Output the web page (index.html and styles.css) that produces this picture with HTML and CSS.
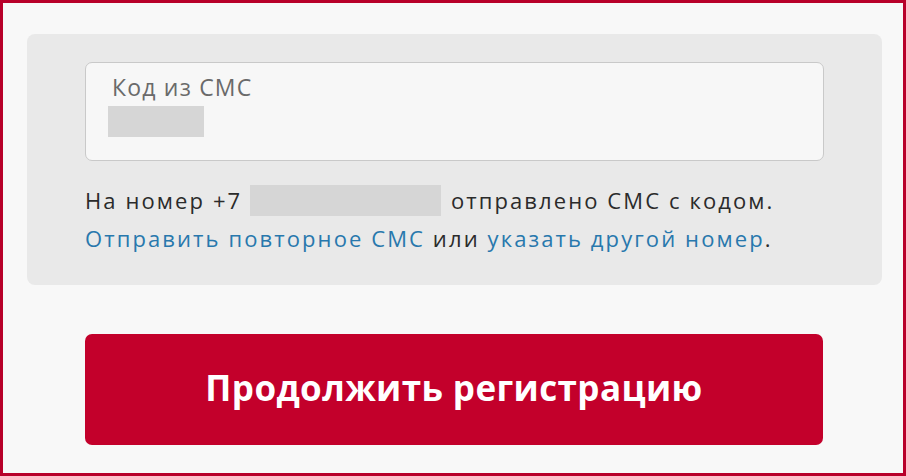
FILE: index.html
```html
<!DOCTYPE html>
<html lang="ru">
<head>
<meta charset="utf-8">
<link rel="stylesheet" href="styles.css">
</head>
<body>
<div class="frame">
  <div class="panel">
    <div class="field">
      <div class="field-label">Код из СМС</div>
      <div class="blur code-blur"></div>
    </div>
    <p class="info">На номер +7 <span class="blur phone-blur"></span> отправлено СМС с кодом.<br><a href="#" class="link">Отправить повторное СМС</a> или <a href="#" class="link">указать другой номер</a>.</p>
  </div>
  <div class="actions">
    <button class="btn">Продолжить регистрацию</button>
  </div>
</div>
</body>
</html>
```
FILE: styles.css
```css
html, body {
  margin: 0;
  padding: 0;
  background: #ffffff;
}
body {
  font-family: "Open Sans", "Liberation Sans", sans-serif;
  color: #333;
}
.frame {
  box-sizing: border-box;
  width: 906px;
  height: 476px;
  border: 3px solid #b8002a;
  background: #f8f8f8;
  padding: 31px 21px 0 24px;
}
.panel {
  background: #e9e9e9;
  border-radius: 8px;
  padding: 28px 58px 0 58px;
  height: 251px;
  box-sizing: border-box;
}
.field {
  box-sizing: border-box;
  height: 99px;
  border: 1px solid #c9c9c9;
  border-radius: 7px;
  background: #f7f7f7;
  padding: 10px 22px 0 22px;
}
.field-label {
  font-size: 23px;
  line-height: 28px;
  letter-spacing: 1.2px;
  color: #6a6a6a;
  padding-left: 4px;
}
.blur {
  display: inline-block;
  background: #d6d6d6;
}
.code-blur {
  display: block;
  width: 96px;
  height: 31px;
  margin-top: 5px;
}
.info {
  margin: 20px 0 0 0;
  font-size: 22px;
  line-height: 38px;
  letter-spacing: 2.1px;
  color: #2b2b2b;
}
.phone-blur {
  width: 191px;
  height: 31px;
  vertical-align: -7px;
  margin: 0 2px 0 0;
}
.link {
  color: #2878ad;
  text-decoration: none;
}
.actions {
  padding: 49px 59px 0 58px;
}
.btn {
  display: block;
  width: 100%;
  height: 111px;
  border: none;
  border-radius: 7px;
  background: #c3002b;
  color: #fff;
  font-family: "Open Sans", "Liberation Sans", sans-serif;
  font-weight: 700;
  font-size: 35px;
  letter-spacing: 0.4px;
  padding: 0 0 4px 0;
  cursor: pointer;
}
```
